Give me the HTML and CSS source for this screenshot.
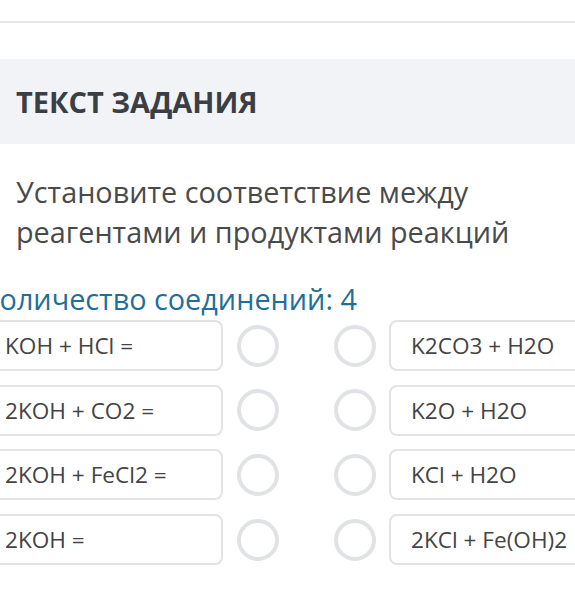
FILE: index.html
```html
<html>

<head>
  <link rel="stylesheet" href="styles.css">
</head>

<body>
  <div class="topbar"></div>
  <div class="task-header">
    <h2>ТЕКСТ ЗАДАНИЯ</h2>
  </div>
  <p class="task-text">Установите соответствие между реагентами и продуктами реакций</p>
  <div class="match">
    <div class="match-count">Количество соединений: 4</div>
    <div class="match-row">
      <div class="item left">KOH + HCl =</div>
      <span class="dot"></span>
      <span class="dot far"></span>
      <div class="item right">K2CO3 + H2O</div>
    </div>
    <div class="match-row">
      <div class="item left">2KOH + CO2 =</div>
      <span class="dot"></span>
      <span class="dot far"></span>
      <div class="item right">K2O + H2O</div>
    </div>
    <div class="match-row">
      <div class="item left">2KOH + FeCl2 =</div>
      <span class="dot"></span>
      <span class="dot far"></span>
      <div class="item right">KCl + H2O</div>
    </div>
    <div class="match-row">
      <div class="item left">2KOH =</div>
      <span class="dot"></span>
      <span class="dot far"></span>
      <div class="item right">2KCl + Fe(OH)2</div>
    </div>
  </div>
</body>

</html>
```

FILE: styles.css
```css
html,
body {
  overflow: hidden;
}

body {
  margin: 0;
  background-color: white;
  font-family: "Open Sans", sans-serif;
  color: #4a4a4a;
}

.topbar {
  height: 21px;
  border-bottom: 2px solid #e6e6e6;
}

.task-header {
  margin-top: 36px;
  height: 85px;
  background-color: #f2f3f7;
  display: flex;
  align-items: center;
  padding-left: 16px;
}

.task-header h2 {
  margin: 0;
  font-size: 29px;
  font-weight: bold;
  color: #3a3e45;
}

.task-text {
  margin: 28px 40px 0 16px;
  font-size: 28.8px;
  line-height: 40px;
  color: #4a4a4a;
}

.match {
  margin-top: 27px;
  margin-left: -22px;
  display: flex;
  flex-direction: column;
  gap: 13.7px;
}

.match-count {
  margin-left: 4px;
  margin-bottom: -12.7px;
  font-size: 28.8px;
  line-height: 40px;
  color: #1f6e9b;
  white-space: nowrap;
}

.match-row {
  display: flex;
  align-items: center;
  white-space: nowrap;
}

.item {
  box-sizing: border-box;
  height: 51px;
  display: flex;
  align-items: center;
  border: 2px solid #e3e3e3;
  border-radius: 8px;
  font-size: 22.6px;
  color: #444;
  flex-shrink: 0;
}

.left {
  width: 245px;
  padding-left: 25px;
}

.right {
  width: 240px;
  padding-left: 20px;
  margin-left: 13px;
}

.dot {
  box-sizing: border-box;
  width: 42px;
  height: 42px;
  border: 4px solid #e0e2e5;
  border-radius: 50%;
  margin-left: 14px;
  flex-shrink: 0;
}

.dot.far {
  margin-left: 55px;
}
```
